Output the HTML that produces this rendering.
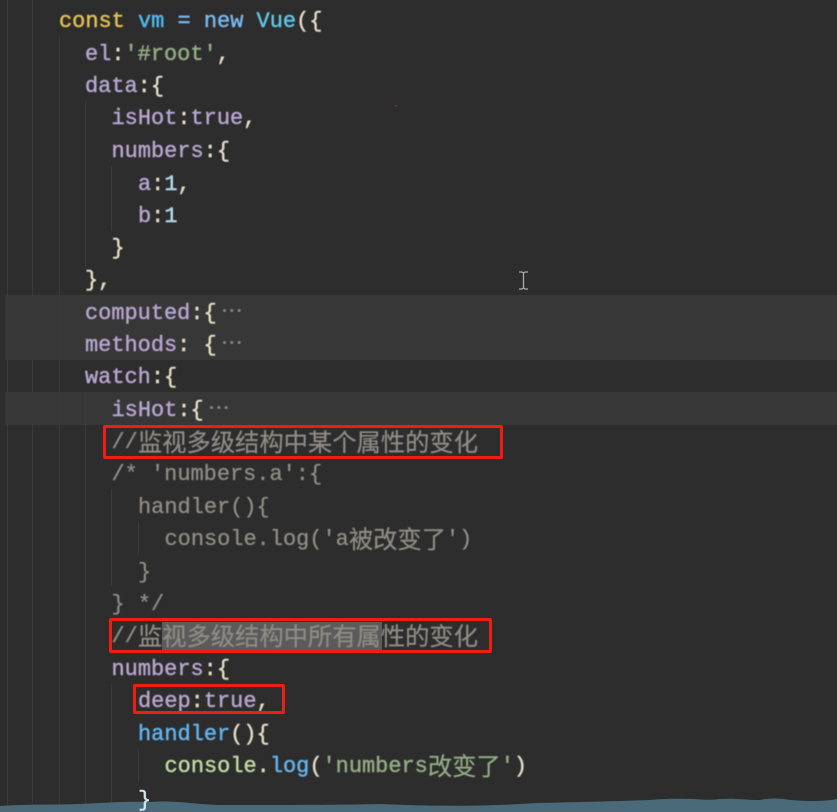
<!DOCTYPE html>
<html lang="zh">
<head>
<meta charset="utf-8">
<style>
html,body{margin:0;padding:0;background:#2d2d2d}
#s{position:relative;width:837px;height:812px;overflow:hidden;background:#2d2d2d}
.b{position:absolute;left:5px;width:832px;background:#373737}
.g{position:absolute;width:1px;background:#3a3a3a}
#t{position:absolute;left:0;top:2px;width:837px;height:812px;filter:blur(.5px)}
.l{position:absolute;white-space:pre;font:400 21.95px/32px "Liberation Mono","Noto Sans CJK SC",monospace;-webkit-text-stroke:.45px currentColor;color:#e4dcc4;height:32px}
.l i{font-style:normal;display:inline-block;position:relative;top:-2px;font:400 24.3px/32px "Noto Sans CJK SC",sans-serif;width:24.3px;vertical-align:top;text-align:center;-webkit-text-stroke:.2px currentColor}
.p{color:#b7a5cf}.y{color:#e3c052}.c{color:#4fb9f2}.n{color:#79b8ee}.v{color:#62c6e8}
.s{color:#93ad86}.m{color:#8f8d84;-webkit-text-stroke:.3px currentColor}.o{color:#c3d8a3}.f{color:#64b4ef}.d{color:#b8dcef}
.k{color:#8a8a8a;margin-left:-9px;-webkit-text-stroke:.1px currentColor}
.r{position:absolute;border:3px solid #f01d12;border-radius:2px;box-sizing:border-box}
</style>
</head>
<body>
<div id="s">
<div class="b" style="top:295px;height:65px"></div>
<div class="b" style="top:392px;height:33px"></div>
<div class="g" style="left:7px;top:0;height:812px"></div>
<div class="g" style="left:32px;top:0;height:812px"></div>
<div class="g" style="left:59px;top:36px;height:776px"></div>
<div class="g" style="left:85px;top:101px;height:166px"></div>
<div class="g" style="left:85px;top:392px;height:420px"></div>
<div class="g" style="left:111px;top:166px;height:65px"></div>
<div class="g" style="left:111px;top:489px;height:97px"></div>
<div class="g" style="left:111px;top:684px;height:128px"></div>
<div class="g" style="left:138px;top:522px;height:33px"></div>
<div class="g" style="left:138px;top:749px;height:33px"></div>
<div style="position:absolute;left:162px;top:622px;width:220px;height:29px;background:#5b5b5b"></div>
<div id="t">
<div class="l" style="left:59px;top:4px"><span class="y">const</span> <span class="c">vm</span> <span class="n">=</span> <span class="n">new</span> <span class="v">Vue</span>({</div>
<div class="l" style="left:85px;top:37px"><span class="p">el</span>:<span class="s">'#root'</span>,</div>
<div class="l" style="left:85px;top:69px"><span class="p">data</span>:{</div>
<div class="l" style="left:111.5px;top:101px"><span class="p">isHot</span>:<span class="p">true</span>,</div>
<div class="l" style="left:111.5px;top:134px"><span class="p">numbers</span>:{</div>
<div class="l" style="left:138px;top:167px"><span class="p">a</span>:<span class="d">1</span>,</div>
<div class="l" style="left:138px;top:199px"><span class="p">b</span>:<span class="d">1</span></div>
<div class="l" style="left:111.5px;top:231px">}</div>
<div class="l" style="left:85px;top:263px">},</div>
<div class="l" style="left:85px;top:296px"><span class="p">computed</span>:{ <span class="k">⋯</span></div>
<div class="l" style="left:85px;top:328px"><span class="p">methods</span>: { <span class="k">⋯</span></div>
<div class="l" style="left:85px;top:360px"><span class="p">watch</span>:{</div>
<div class="l" style="left:111.5px;top:393px"><span class="p">isHot</span>:{ <span class="k">⋯</span></div>
<div class="l m" style="left:111.5px;top:425px">//<i>监</i><i>视</i><i>多</i><i>级</i><i>结</i><i>构</i><i>中</i><i>某</i><i>个</i><i>属</i><i>性</i><i>的</i><i>变</i><i>化</i></div>
<div class="l m" style="left:111.5px;top:457px">/* 'numbers.a':{</div>
<div class="l m" style="left:138px;top:490px">handler(){</div>
<div class="l m" style="left:164.5px;top:522px">console.log('a<i>被</i><i>改</i><i>变</i><i>了</i>')</div>
<div class="l m" style="left:138px;top:555px">}</div>
<div class="l m" style="left:111.5px;top:587px">} */</div>
<div class="l m" style="left:111.5px;top:619px">//<i>监</i><i>视</i><i>多</i><i>级</i><i>结</i><i>构</i><i>中</i><i>所</i><i>有</i><i>属</i><i>性</i><i>的</i><i>变</i><i>化</i></div>
<div class="l" style="left:111.5px;top:652px"><span class="p">numbers</span>:{</div>
<div class="l" style="left:138px;top:684px"><span class="p">deep</span>:<span class="p">true</span>,</div>
<div class="l" style="left:138px;top:717px"><span class="f">handler</span>(){</div>
<div class="l" style="left:164.5px;top:749px"><span class="o">console</span>.<span class="f">log</span>(<span class="s">'numbers<i>改</i><i>变</i><i>了</i>'</span>)</div>
</div>
<div class="r" style="left:103px;top:425px;width:400px;height:34px"></div>
<div class="r" style="left:109px;top:618px;width:383px;height:35px"></div>
<div class="r" style="left:133px;top:684px;width:152px;height:30px"></div>
<svg style="position:absolute;left:0;top:0" width="837" height="812" viewBox="0 0 837 812">
<path d="M519 272h3l1.500 1 1.500-1h3M523.500 273v15M519 289h3l1.500-1 1.500 1h3" fill="none" stroke="#aaa" stroke-width="1.300"/>
<rect x="395" y="105" width="2" height="1.500" fill="#8a2a2a"/>
<path d="M0 806 C30 804 50 805 80 804 C100 803 130 801 150 802 C175 800 190 804 220 805 C300 805 340 805 380 804 C420 806 480 807 537 803 C580 802 620 801 650 800 C670 798 690 799 695 799 C705 800 712 800 720 799 C735 798 745 800 760 800 C770 798 780 798 790 800 C805 801 820 802 837 799 L837 812 L0 812Z" fill="#4a6a79"/>
<text x="138" y="806" font-family="Liberation Mono,monospace" font-size="22" stroke="#cfe2ee" stroke-width=".45" fill="#cfe2ee">}</text>
</svg>
</div>
</body>
</html>
